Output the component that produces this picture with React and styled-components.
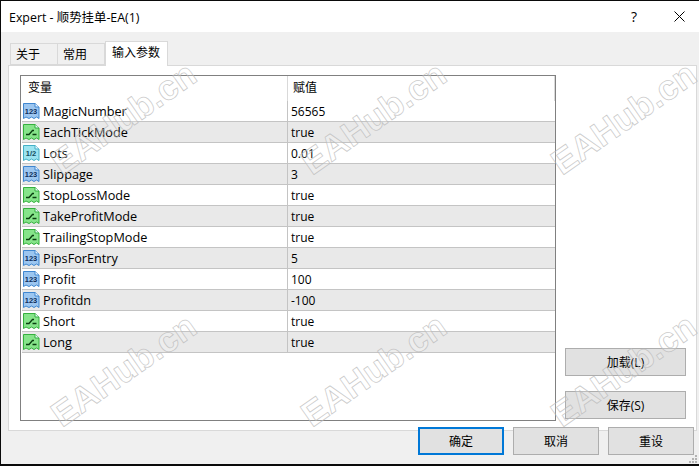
import React from "react";
import styled, { createGlobalStyle } from "styled-components";

const FONT = `"Open Sans", "Noto Sans CJK SC", sans-serif`;

const GlobalStyle = createGlobalStyle`
  html, body {
    margin: 0;
    padding: 0;
    background: #0a0a0a;
    overflow: hidden;
  }
`;

const params = [
  { name: "MagicNumber", value: "56565", type: "int" },
  { name: "EachTickMode", value: "true", type: "bool" },
  { name: "Lots", value: "0.01", type: "dbl" },
  { name: "Slippage", value: "3", type: "int" },
  { name: "StopLossMode", value: "true", type: "bool" },
  { name: "TakeProfitMode", value: "true", type: "bool" },
  { name: "TrailingStopMode", value: "true", type: "bool" },
  { name: "PipsForEntry", value: "5", type: "int" },
  { name: "Profit", value: "100", type: "int" },
  { name: "Profitdn", value: "-100", type: "int" },
  { name: "Short", value: "true", type: "bool" },
  { name: "Long", value: "true", type: "bool" },
];

// where each watermark's baseline starts
const marks = [
  { x: 62, y: 176 },
  { x: 312, y: 176 },
  { x: 562, y: 176 },
  { x: 62, y: 428 },
  { x: 312, y: 428 },
  { x: 562, y: 428 },
];

const iconColors = {
  int: { fill: "#9cc6f0", edge: "#3f86d0", ink: "#0f2f5c", label: "123" },
  dbl: { fill: "#9ce4f0", edge: "#43b0c6", ink: "#124e5e", label: "1/2" },
  bool: { fill: "#86e48a", edge: "#35b03e", ink: "#0a3f10" },
};

const TypeIcon = ({ type }) => {
  const c = iconColors[type];
  return (
    <svg width="17" height="16" viewBox="0 0 17 16">
      <path
        d="M0.5 0.5 H12 L16 4 V15.5 L13.5 14 L11 15.5 L8.5 14 L6 15.5 L3 14 L0.5 15.5 Z"
        fill={c.fill}
        stroke={c.edge}
      />
      <path d="M12 0.5 V4 H16" fill="#e8f4ff" stroke={c.edge} />
      {c.label ? (
        <text
          x="8"
          y="11"
          textAnchor="middle"
          fontFamily="Liberation Sans, sans-serif"
          fontSize="7.5"
          fontWeight="700"
          fill={c.ink}
        >
          {c.label}
        </text>
      ) : (
        <path d="M3 10.5 H6 L9.5 6.5 H11 M9.5 10.5 H13.5" fill="none" stroke={c.ink} strokeWidth="1.3" />
      )}
    </svg>
  );
};

const Page = styled.div`
  position: relative;
  width: 699px;
  height: 466px;
  overflow: hidden;
  font-family: ${FONT};
  font-size: 12px;
  color: #000;
`;

const Window = styled.div`
  display: flex;
  flex-direction: column;
  height: 463px;
  margin: 1px 0 0 1px;
  background: #f0f0f0;
`;

const TitleBar = styled.header`
  display: flex;
  align-items: center;
  height: 31px;
  padding-left: 8px;
  background: #fff;
  font-size: 12.4px;
`;

const Title = styled.span`
  flex: 1;
`;

const HelpMark = styled.span`
  width: 46px;
  text-align: center;
  font-size: 14px;
  margin-right: 2px;
`;

const CloseButton = styled.span`
  display: flex;
  justify-content: center;
  width: 40px;
`;

const Tabs = styled.nav`
  display: flex;
  align-items: flex-end;
  height: 33px;
  padding-left: 9px;
`;

const Tab = styled.div`
  position: relative;
  box-sizing: border-box;
  height: ${(p) => (p.$active ? "25px" : "22px")};
  width: ${(p) => p.$width}px;
  margin-bottom: ${(p) => (p.$active ? "-1px" : "0")};
  padding-left: ${(p) => (p.$active ? "6px" : "5px")};
  line-height: ${(p) => (p.$active ? "22px" : "21px")};
  background: ${(p) => (p.$active ? "#fff" : "#f0f0f0")};
  border: 1px solid #d9d9d9;
  border-bottom: ${(p) => (p.$active ? "none" : "1px solid #d9d9d9")};
  border-left-width: ${(p) => (p.$first || p.$active ? "1px" : "0")};
  z-index: ${(p) => (p.$active ? 1 : 0)};
`;

const Panel = styled.section`
  box-sizing: border-box;
  display: flex;
  height: 366px;
  margin: 0 2px 0 7px;
  padding: 9px 0 11px 11px;
  background: #fff;
  border: 1px solid #d9d9d9;
`;

const List = styled.div`
  box-sizing: border-box;
  width: 536px;
  height: 346px;
  padding: 0 0 0 1px;
  border: 1px solid #808080;
`;

const HeaderRow = styled.div`
  display: grid;
  grid-template-columns: 266px 1fr;
  height: 25px;
  line-height: 24px;
`;

const HeaderCell = styled.div`
  box-sizing: border-box;
  padding-left: ${(p) => p.$pad}px;
  border-right: 1px solid #d9d9d9;
`;

const Row = styled.div`
  box-sizing: border-box;
  display: grid;
  grid-template-columns: 266px 1fr;
  grid-template-rows: 20px;
  height: 21px;
  line-height: 20px;
  background: ${(p) => (p.$alt ? "#e9e9e9" : "#fff")};
  border-bottom: 1px solid #c4c4c4;
`;

const NameCell = styled.div`
  display: flex;
  align-items: center;
  gap: 3px;
  padding-left: 1px;
  font-size: 12.7px;
  border-right: 1px solid #c4c4c4;
  svg {
    flex: none;
  }
`;

const ValueCell = styled.div`
  padding-left: 3px;
  line-height: 21px;
`;

const SideColumn = styled.div`
  display: flex;
  flex-direction: column;
  justify-content: flex-end;
  gap: 15px;
  margin-left: 9px;
`;

const Button = styled.button`
  box-sizing: border-box;
  width: ${(p) => p.$width}px;
  height: 28px;
  padding: 0;
  font: inherit;
  color: #000;
  background: #e1e1e1;
  border: ${(p) => (p.$primary ? "2px solid #0078d7" : "1px solid #adadad")};
`;

const Footer = styled.footer`
  position: relative;
  display: flex;
  justify-content: flex-end;
  gap: 9px;
  margin-top: -4px;
  padding-right: 5px;
`;

const Grip = styled.svg`
  position: absolute;
  right: 1px;
  bottom: 2px;
`;

const Marks = styled.div`
  position: absolute;
  inset: 0;
  pointer-events: none;
`;

const Mark = styled.span`
  position: absolute;
  left: ${(p) => p.$x}px;
  top: ${(p) => p.$y - 30}px;
  font-family: "Liberation Sans", sans-serif;
  font-size: 35px;
  font-weight: 700;
  line-height: 1;
  white-space: nowrap;
  color: rgba(255, 255, 255, 0.2);
  -webkit-text-stroke: 0.8px rgba(185, 185, 185, 0.75);
  transform: rotate(-35deg);
  transform-origin: 0 30px;
`;

export default function App() {
  return (
    <Page>
      <GlobalStyle />
      <Window>
        <TitleBar>
          <Title>Expert - 顺势挂单-EA(1)</Title>
          <HelpMark>?</HelpMark>
          <CloseButton>
            <svg width="11" height="11" viewBox="0 0 11 11">
              <path d="M0.5 0.5 L10.5 10.5 M10.5 0.5 L0.5 10.5" stroke="#000" />
            </svg>
          </CloseButton>
        </TitleBar>
        <Tabs>
          <Tab $first $width={48}>关于</Tab>
          <Tab $width={47}>常用</Tab>
          <Tab $active $width={63}>输入参数</Tab>
        </Tabs>
        <Panel>
          <List>
            <HeaderRow>
              <HeaderCell $pad={6}>变量</HeaderCell>
              <HeaderCell $pad={5}>赋值</HeaderCell>
            </HeaderRow>
            {params.map((item, i) => (
              <Row key={item.name} $alt={i % 2 === 1}>
                <NameCell>
                  <TypeIcon type={item.type} />
                  {item.name}
                </NameCell>
                <ValueCell>{item.value}</ValueCell>
              </Row>
            ))}
          </List>
          <SideColumn>
            <Button $width={121}>加载(L)</Button>
            <Button $width={121}>保存(S)</Button>
          </SideColumn>
        </Panel>
        <Footer>
          <Button $width={86} $primary>确定</Button>
          <Button $width={86}>取消</Button>
          <Button $width={86}>重设</Button>
        </Footer>
      </Window>
      <Grip width="10" height="10" viewBox="0 0 10 10">
        <path d="M7 1h2v2H7zM4 4h2v2H4zM7 4h2v2H7zM1 7h2v2H1zM4 7h2v2H4zM7 7h2v2H7z" fill="#b4b4b4" />
      </Grip>
      <Marks>
        {marks.map((m) => (
          <Mark key={`${m.x}-${m.y}`} $x={m.x} $y={m.y}>EAHub.cn</Mark>
        ))}
      </Marks>
    </Page>
  );
}
